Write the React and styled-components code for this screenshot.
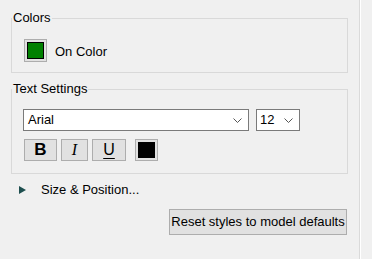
import React from "react";
import styled, { createGlobalStyle } from "styled-components";

const Global = createGlobalStyle`
  html, body { margin: 0; padding: 0; background: #f0f0f0; }
  body { font-family: "Liberation Sans", Arial, sans-serif; font-size: 13px; color: #000; }
  * { box-sizing: border-box; }
`;

const Panel = styled.div`
  width: 360px;
  height: 259px;
  padding: 11px 11px 0 11px;
  border-right: 1px solid #dadada;
  box-shadow: 1px 0 0 #ffffff;
  display: flex;
  flex-direction: column;
  line-height: 14px;
`;

const Group = styled.fieldset`
  margin: 0 0 ${(p) => p.$gapAfter || 0}px 0;
  padding: 0;
  border: 1px solid #d9d9d9;
  min-width: 0;
`;

const Legend = styled.legend`
  padding: 0 1px;
  margin: 0;
  line-height: 14px;
`;

const GroupBody = styled.div`
  padding: ${(p) => p.$pad};
`;

const ColorRow = styled.div`
  display: flex;
  align-items: center;
  gap: 8px;
`;

const SwatchButton = styled.div`
  width: 23px;
  height: ${(p) => p.$h}px;
  border: 1px solid #adadad;
  background: #e1e1e1;
  padding: 2px;
  display: flex;
`;

const SwatchFill = styled.div`
  flex: 1;
  border: 1px solid #000;
  background: ${(p) => p.$color};
`;

const Label = styled.span`
  padding-top: ${(p) => p.$dy || 0}px;
`;

const ComboRow = styled.div`
  display: flex;
  gap: 7px;
`;

const Combo = styled.div`
  width: ${(p) => p.$w}px;
  height: 22px;
  border: 1px solid #7a7a7a;
  background: #fff;
  display: flex;
  align-items: center;
  padding: 0 6px 0 ${(p) => p.$pl}px;
`;

const ComboText = styled.span`
  flex: 1;
`;

const Chevron = () => (
  <svg width="9" height="5" viewBox="0 0 9 5" style={{ display: "block" }}>
    <polyline points="0.5,0.5 4.5,4.5 8.5,0.5" fill="none" stroke="#555" strokeWidth="1" />
  </svg>
);

const ToolRow = styled.div`
  display: flex;
  align-items: center;
  margin: 8px 0 0 1px;
`;

const StyleButton = styled.div`
  width: ${(p) => p.$w}px;
  height: 22px;
  margin-right: ${(p) => p.$mr}px;
  border: 1px solid #adadad;
  background: #e1e1e1;
  display: flex;
  align-items: center;
  justify-content: center;
  font-size: 17px;
  line-height: 16px;
`;

const BoldGlyph = styled.span`
  font-family: "Liberation Sans", Arial, sans-serif;
  font-weight: bold;
`;

const ItalicGlyph = styled.span`
  font-family: "Liberation Serif", "Times New Roman", serif;
  font-style: italic;
  font-size: 16px;
`;

const UnderGlyph = styled.span`
  font-family: "Liberation Sans", Arial, sans-serif;
  font-size: 16px;
  text-decoration: underline;
  text-underline-offset: 3px;
  text-decoration-thickness: 1px;
`;

const Expander = styled.div`
  display: flex;
  align-items: center;
  margin: 9px 0 0 8px;
  gap: 15px;
`;

const Triangle = () => (
  <svg width="7" height="8" viewBox="0 0 7 8" style={{ display: "block" }}>
    <polygon points="0,0 7,4 0,8" fill="#1e4f4f" />
  </svg>
);

const ResetButton = styled.div`
  align-self: flex-end;
  margin: 12px 1px 0 0;
  width: 178px;
  height: 26px;
  border: 1px solid #adadad;
  background: #e1e1e1;
  display: flex;
  align-items: center;
  justify-content: center;
  white-space: nowrap;
`;

export default function App() {
  return (
    <>
      <Global />
      <Panel>
        <Group $gapAfter={9}>
          <Legend>Colors</Legend>
          <GroupBody $pad="14px 12px 10px 12px">
            <ColorRow>
              <SwatchButton $h={23}>
                <SwatchFill $color="#008000" />
              </SwatchButton>
              <Label $dy={2}>On Color</Label>
            </ColorRow>
          </GroupBody>
        </Group>
        <Group>
          <Legend>Text Settings</Legend>
          <GroupBody $pad="13px 11px 12px 11px">
            <ComboRow>
              <Combo $w={226} $pl={4}>
                <ComboText>Arial</ComboText>
                <Chevron />
              </Combo>
              <Combo $w={44} $pl={3}>
                <ComboText>12</ComboText>
                <Chevron />
              </Combo>
            </ComboRow>
            <ToolRow>
              <StyleButton $w={33} $mr={4}>
                <BoldGlyph>B</BoldGlyph>
              </StyleButton>
              <StyleButton $w={27} $mr={4}>
                <ItalicGlyph>I</ItalicGlyph>
              </StyleButton>
              <StyleButton $w={34} $mr={9}>
                <UnderGlyph>U</UnderGlyph>
              </StyleButton>
              <SwatchButton $h={22}>
                <SwatchFill $color="#000" />
              </SwatchButton>
            </ToolRow>
          </GroupBody>
        </Group>
        <Expander>
          <Triangle />
          <span>Size &amp; Position...</span>
        </Expander>
        <ResetButton>Reset styles to model defaults</ResetButton>
      </Panel>
    </>
  );
}
